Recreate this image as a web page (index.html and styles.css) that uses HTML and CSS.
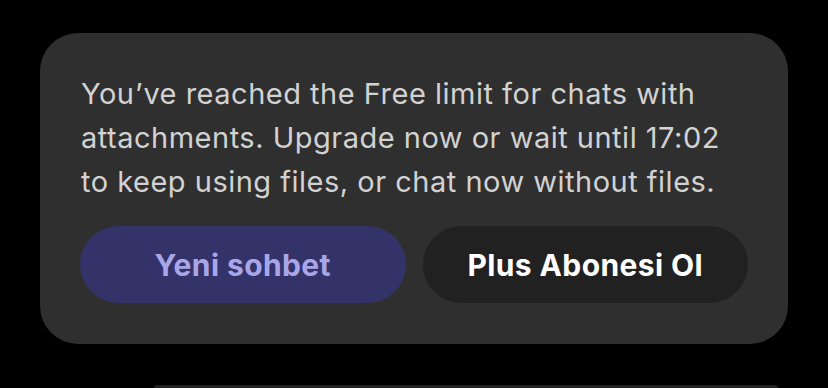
FILE: index.html
```html
<!DOCTYPE html>
<html>
<head>
<meta charset="utf-8">
<link rel="stylesheet" href="styles.css">
</head>
<body>
<div class="card">
  <p class="msg">You’ve reached the Free limit for chats with attachments. Upgrade now or wait until 17:02 to keep using files, or chat now without files.</p>
  <div class="actions">
    <button class="btn btn-new">Yeni sohbet</button>
    <button class="btn btn-plus">Plus Abonesi Ol</button>
  </div>
</div>
<div class="next"></div>
</body>
</html>
```
FILE: styles.css
```css
html, body {
  margin: 0;
  padding: 0;
  background: #000;
}
body {
  font-family: Inter, "Noto Sans", sans-serif;
  padding-top: 33px;
}
.card {
  margin-left: 40px;
  width: 748px;
  height: 311px;
  box-sizing: border-box;
  background: #2f2f2f;
  border-radius: 38px;
  padding: 39px 40px 41px 41px;
  display: flex;
  flex-direction: column;
}
.msg {
  margin: 0;
  color: #d2d2d2;
  font-size: 29px;
  line-height: 44px;
  font-weight: 400;
  letter-spacing: 0.5px;
  width: 665px;
}
.actions {
  margin-top: auto;
  display: flex;
  gap: 17px;
  margin-left: -1px;
}
.btn {
  flex: 1;
  height: 77px;
  border: none;
  border-radius: 39px;
  font-family: Inter, "Noto Sans", sans-serif;
  font-size: 30px;
  font-weight: 700;
  letter-spacing: 0.4px;
  padding: 0;
}
.btn-new {
  background: #33336a;
  color: #a9a6e8;
}
.btn-plus {
  background: #212121;
  color: #ffffff;
}
.next {
  margin: 41px 0 0 154px;
  width: 624px;
  height: 3px;
  background: #222222;
  border-radius: 3px 3px 0 0;
}
```
